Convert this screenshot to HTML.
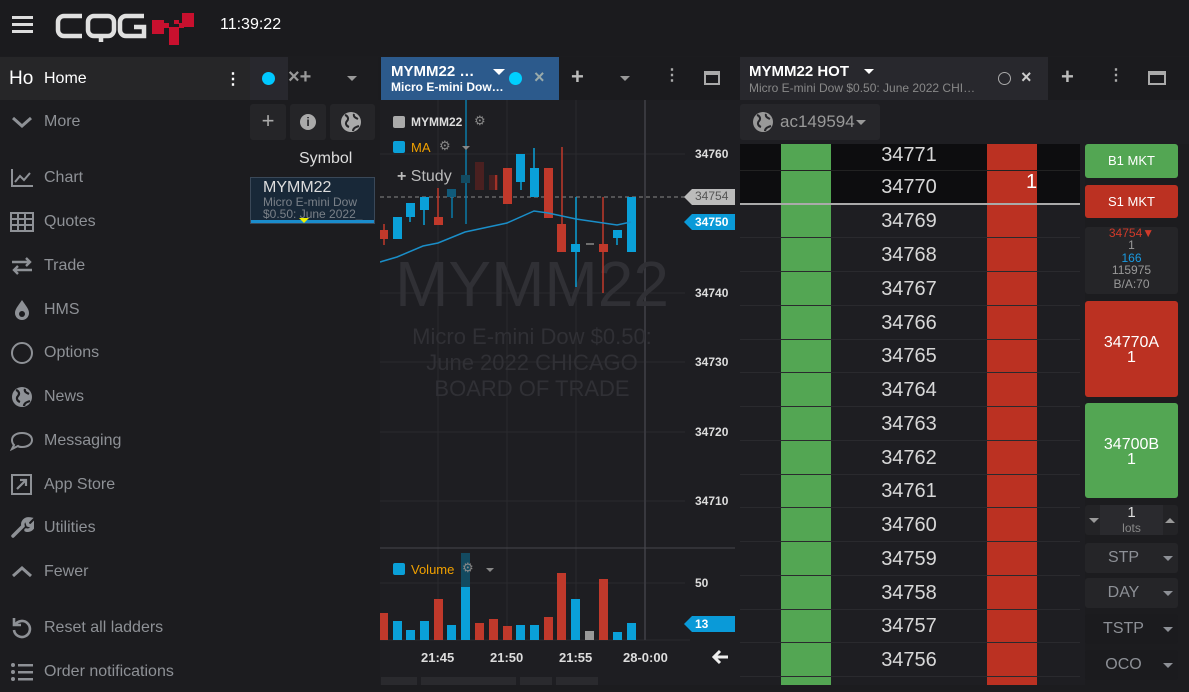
<!DOCTYPE html>
<html><head><meta charset="utf-8"><style>
*{box-sizing:border-box;margin:0;padding:0}
body{width:1189px;height:685px;overflow:hidden;background:#1c1c1f;font-family:"Liberation Sans",Arial,sans-serif;position:relative;color:#ddd}
.a{position:absolute}
.side .it{position:absolute;left:0;width:250px;height:40px;display:flex;align-items:center;font-size:16px;color:#8e9196}
.side .it svg{position:absolute;left:10px}
.side .it span{position:absolute;left:44px}
.row{position:absolute;left:740px;width:340px;height:34px;border-bottom:1px solid #2a2a2e}
.px{position:absolute;left:831px;width:156px;text-align:center;font-size:20px;color:#d8d8d8;line-height:34px}
.btn{position:absolute;left:1085px;width:93px;border-radius:3px;text-align:center;color:#fff;font-size:13px}
.sel{position:absolute;left:1085px;width:93px;height:30px;background:#252528;border-radius:3px;color:#8d9096;font-size:16px;line-height:30px;padding-right:16px;text-align:center}
.sel:after{content:"";position:absolute;right:5px;top:13px;border:5px solid transparent;border-top:5px solid #8d9096}
.ax{position:absolute;left:695px;font-size:12px;color:#ddd;font-weight:bold}
</style></head><body>
<!-- top bar -->
<div class="a" style="left:0;top:0;width:1189px;height:56px;background:#1b1b1e"></div>
<div class="a" style="left:12px;top:16px;width:21px;height:3px;background:#ddd;box-shadow:0 7px 0 #ddd,0 14px 0 #ddd"></div>
<svg class="a" style="left:54px;top:10px" width="145" height="36">
<g fill="none" stroke="#e0e0e0" stroke-width="4.5">
<path d="M28 6H10a6 6 0 00-6 6v8a6 6 0 006 6h18"/>
<rect x="34" y="6" width="26" height="20" rx="6"/><path d="M47 26v6"/>
<path d="M90 6H72a6 6 0 00-6 6v8a6 6 0 006 6h18v-9h-10"/>
</g>
<g fill="#c8102e"><rect x="98" y="10" width="12" height="14"/><rect x="110" y="13" width="5" height="5"/><rect x="115" y="17" width="10" height="18"/><rect x="125" y="13" width="5" height="5"/><rect x="128" y="3" width="12" height="14"/><rect x="120" y="10" width="5" height="4"/></g>
</svg>
<div class="a" style="left:220px;top:16px;font-size:16px;color:#fff">11:39:22</div>

<!-- sidebar -->
<div class="side">
<div class="it" style="top:57px;height:43px;background:#262628;color:#fff"><span style="left:9px;font-size:19px">Ho</span><span style="font-size:16px">Home</span><span style="left:225px;font-weight:bold">⋮</span></div>
<div class="it" style="top:102px"><svg width="24" height="14" viewBox="0 0 24 14"><path d="M3 3l9 8 9-8" stroke="#8e9196" stroke-width="3" fill="none"/></svg><span>More</span></div>
<div class="it" style="top:158px"><svg width="24" height="20"><path d="M2 1v17h21M5 14l5-6 4 4 6-7" stroke="#8e9196" stroke-width="2" fill="none"/></svg><span>Chart</span></div>
<div class="it" style="top:202px"><svg width="24" height="20"><rect x="1" y="1" width="22" height="18" stroke="#8e9196" stroke-width="2" fill="none"/><path d="M1 7h22M1 13h22M8 1v18M15 1v18" stroke="#8e9196" stroke-width="2"/></svg><span>Quotes</span></div>
<div class="it" style="top:246px"><svg width="24" height="20"><path d="M2 6h18M16 2l4 4-4 4M22 14H4M8 10l-4 4 4 4" stroke="#8e9196" stroke-width="2.4" fill="none"/></svg><span>Trade</span></div>
<div class="it" style="top:290px"><svg width="24" height="22"><path d="M12 1c-4 6-7 9-7 13a7 7 0 0014 0c0-4-3-7-7-13z" fill="#8e9196"/><circle cx="12" cy="15" r="3" fill="#1c1c1f"/></svg><span>HMS</span></div>
<div class="it" style="top:333px"><svg width="24" height="24"><circle cx="12" cy="12" r="10" stroke="#8e9196" stroke-width="2" fill="none"/></svg><span>Options</span></div>
<div class="it" style="top:377px"><svg width="24" height="24"><circle cx="12" cy="12" r="10" fill="#8e9196"/><path d="M6 5c3 1 4 4 2 6s-1 5 2 6M15 4c-1 3 2 4 4 5M14 21c0-3 3-4 6-5" stroke="#1c1c1f" stroke-width="2.2" fill="none"/></svg><span>News</span></div>
<div class="it" style="top:421px"><svg width="24" height="24"><path d="M12 4c6 0 10 3 10 7s-4 7-10 7c-2 0-3 0-4-1l-6 3 2-4c-1-1-2-3-2-5 0-4 4-7 10-7z" stroke="#8e9196" stroke-width="2" fill="none"/></svg><span>Messaging</span></div>
<div class="it" style="top:465px"><svg width="24" height="24"><rect x="2" y="2" width="19" height="19" stroke="#8e9196" stroke-width="2" fill="none"/><path d="M7 16l9-9M10 7h6v6" stroke="#8e9196" stroke-width="2.2" fill="none"/></svg><span>App Store</span></div>
<div class="it" style="top:508px"><svg width="24" height="24"><path d="M3 20l10-10M13 10c-1-4 2-8 7-7l-3 3 1 3 3 1 3-3c0 5-4 8-8 7" stroke="#8e9196" stroke-width="3.5" fill="none" stroke-linecap="round"/></svg><span>Utilities</span></div>
<div class="it" style="top:552px"><svg width="24" height="14"><path d="M3 11l9-8 9 8" stroke="#8e9196" stroke-width="3" fill="none"/></svg><span>Fewer</span></div>
<div class="it" style="top:608px"><svg width="24" height="24"><path d="M5 9a8 8 0 11-1 5M4 2v7h7" stroke="#8e9196" stroke-width="2.6" fill="none"/></svg><span>Reset all ladders</span></div>
<div class="it" style="top:652px"><svg width="24" height="22"><g fill="#8e9196"><circle cx="3" cy="4" r="2"/><circle cx="3" cy="11" r="2"/><circle cx="3" cy="18" r="2"/><rect x="8" y="3" width="15" height="2.5"/><rect x="8" y="10" width="15" height="2.5"/><rect x="8" y="17" width="15" height="2.5"/></g></svg><span>Order notifications</span></div>
</div>

<!-- symbol panel -->
<div class="a" style="left:250px;top:57px;width:38px;height:43px;background:#28282e"></div>
<div class="a" style="left:262px;top:72px;width:13px;height:13px;border-radius:50%;background:#00c8ff"></div>
<div class="a" style="left:288px;top:66px;font-size:20px;color:#999;font-weight:bold">×+</div>
<div class="a" style="left:347px;top:76px;border:5px solid transparent;border-top:5px solid #999"></div>
<div class="a" style="left:250px;top:104px;width:36px;height:36px;background:#252528;border-radius:3px;color:#aaa;font-size:22px;text-align:center;line-height:34px">+</div>
<div class="a" style="left:290px;top:104px;width:36px;height:36px;background:#252528;border-radius:3px"><div style="margin:10px auto;width:16px;height:16px;border-radius:50%;background:#aaa;color:#252528;font-size:12px;font-weight:bold;text-align:center;line-height:16px">i</div></div>
<div class="a" style="left:330px;top:104px;width:45px;height:36px;background:#252528;border-radius:3px"><svg style="margin:7px 10px" width="22" height="22"><circle cx="11" cy="11" r="10" fill="#aaa"/><path d="M5 4c3 1 4 4 2 6s-1 5 2 6M14 3c-1 3 2 4 4 5M13 20c0-3 3-4 6-5" stroke="#252528" stroke-width="2" fill="none"/></svg></div>
<div class="a" style="left:299px;top:150px;font-size:16px;color:#ddd">Symbol</div>
<div class="a" style="left:250px;top:177px;width:125px;height:47px;background:#182838;border:1px solid #3a4858;overflow:hidden">
<div style="position:absolute;left:12px;top:1px;font-size:16px;color:#ddd">MYMM22</div>
<div style="position:absolute;left:12px;top:18px;font-size:12px;color:#7a8088;line-height:12px;white-space:nowrap">Micro E-mini Dow<br>$0.50: June 2022_</div>
<div style="position:absolute;left:0;bottom:0;width:125px;height:3px;background:#1a8ccc"></div>
<div style="position:absolute;left:48px;bottom:0;border:5px solid transparent;border-top:5px solid #ee0;border-bottom:0"></div>
</div>

<!-- chart tab bar -->
<div class="a" style="left:378px;top:57px;width:362px;height:43px;background:#1b1b1e"></div>
<div class="a" style="left:381px;top:57px;width:178px;height:43px;background:#2c5a8c"></div>
<div class="a" style="left:391px;top:63px;font-size:15px;color:#fff;font-weight:bold;line-height:17px">MYMM22 …</div>
<div class="a" style="left:391px;top:80px;font-size:12px;color:#fff;font-weight:bold">Micro E-mini Dow…</div>
<div class="a" style="left:493px;top:69px;border:6px solid transparent;border-top:6px solid #fff"></div>
<div class="a" style="left:509px;top:72px;width:13px;height:13px;border-radius:50%;background:#00d0ff"></div>
<div class="a" style="left:534px;top:67px;font-size:18px;color:#9aa;font-weight:bold">×</div>
<div class="a" style="left:571px;top:64px;font-size:22px;color:#bbb;font-weight:bold">+</div>
<div class="a" style="left:620px;top:76px;border:5px solid transparent;border-top:5px solid #999"></div>
<div class="a" style="left:664px;top:65px;font-size:16px;color:#aaa;font-weight:bold">⋮</div>
<div class="a" style="left:704px;top:71px;width:16px;height:14px;border:2px solid #aaa;border-top-width:4px"></div>

<!-- chart -->
<div class="a" style="left:380px;top:100px;width:360px;height:585px;background:#1e1e22"></div>
<svg class="a" style="left:380px;top:100px" width="360" height="585" viewBox="380 100 360 585">
<g stroke="#2a2a2e" stroke-width="1"><line x1="438" y1="100" x2="438" y2="640"/><line x1="507" y1="100" x2="507" y2="640"/><line x1="576" y1="100" x2="576" y2="640"/><line x1="380" y1="154" x2="685" y2="154"/><line x1="380" y1="293" x2="685" y2="293"/><line x1="380" y1="362" x2="685" y2="362"/><line x1="380" y1="432" x2="685" y2="432"/><line x1="380" y1="501" x2="685" y2="501"/><line x1="380" y1="583" x2="685" y2="583"/><line x1="380" y1="640" x2="690" y2="640"/></g>
<line x1="645" y1="100" x2="645" y2="640" stroke="#38383e" stroke-width="2"/>
<line x1="380" y1="548" x2="735" y2="548" stroke="#46464c"/>
<text x="532" y="306" font-size="64" fill="#303035" text-anchor="middle" font-family="Liberation Sans">MYMM22</text>
<g font-size="22" fill="#303035" text-anchor="middle" font-family="Liberation Sans"><text x="532" y="344">Micro E-mini Dow $0.50:</text><text x="532" y="370">June 2022 CHICAGO</text><text x="532" y="396">BOARD OF TRADE</text></g>
<line x1="380" y1="197" x2="690" y2="197" stroke="#888" stroke-dasharray="4,3"/>
<g stroke-width="1.5">
<line x1="384" y1="224" x2="384" y2="245" stroke="#c0392b"/><rect x="380" y="230" width="8" height="9" fill="#c0392b"/>
<rect x="393" y="217" width="9" height="22" fill="#0aa0d8"/>
<line x1="410" y1="203" x2="410" y2="222" stroke="#0aa0d8"/><rect x="406" y="203" width="9" height="14" fill="#0aa0d8"/>
<line x1="424" y1="197" x2="424" y2="225" stroke="#0aa0d8"/><rect x="420" y="197" width="9" height="13" fill="#0aa0d8"/>
<line x1="438" y1="188" x2="438" y2="224" stroke="#c0392b"/><rect x="434" y="217" width="9" height="8" fill="#c0392b"/>
<line x1="452" y1="190" x2="452" y2="218" stroke="#0a7aa8"/><rect x="447" y="189" width="9" height="8" fill="#105a7a"/>
<line x1="466" y1="100" x2="466" y2="224" stroke="#0a7aa8"/><rect x="461" y="175" width="9" height="8" fill="#134a60"/>
<rect x="475" y="162" width="9" height="28" fill="#4a2020"/>
<rect x="489" y="175" width="9" height="15" fill="#4a2020"/><line x1="496" y1="175" x2="496" y2="190" stroke="#c0392b"/>
<rect x="503" y="168" width="9" height="36" fill="#c0392b"/>
<line x1="521" y1="154" x2="521" y2="190" stroke="#0aa0d8"/><rect x="516" y="154" width="9" height="28" fill="#0aa0d8"/>
<line x1="534" y1="148" x2="534" y2="197" stroke="#0aa0d8"/><rect x="530" y="168" width="9" height="29" fill="#0aa0d8"/>
<rect x="544" y="168" width="9" height="50" fill="#c0392b"/>
<line x1="562" y1="147" x2="562" y2="252" stroke="#c0392b"/><rect x="557" y="224" width="9" height="28" fill="#c0392b"/>
<line x1="576" y1="197" x2="576" y2="287" stroke="#0aa0d8"/><rect x="571" y="244" width="9" height="8" fill="#0aa0d8"/>
<line x1="586" y1="244" x2="594" y2="244" stroke="#888"/>
<line x1="603" y1="197" x2="603" y2="293" stroke="#c0392b"/><rect x="599" y="244" width="9" height="8" fill="#c0392b"/>
<line x1="617" y1="230" x2="617" y2="245" stroke="#0aa0d8"/><rect x="613" y="230" width="9" height="8" fill="#0aa0d8"/>
<rect x="627" y="197" width="9" height="55" fill="#0aa0d8"/>
</g>
<polyline points="380,262 397,257 423,246 438,243 465,232 507,223 534,211 548,213 576,219 617,225 631,222" fill="none" stroke="#1a8ec8" stroke-width="1.5"/>
<g>
<rect x="380" y="613" width="8" height="27" fill="#c0392b"/><rect x="393" y="621" width="9" height="19" fill="#0aa0d8"/><rect x="406" y="630" width="9" height="10" fill="#0aa0d8"/><rect x="420" y="621" width="9" height="19" fill="#0aa0d8"/><rect x="434" y="599" width="9" height="41" fill="#c0392b"/><rect x="447" y="625" width="9" height="15" fill="#0aa0d8"/><rect x="461" y="553" width="9" height="34" fill="#134a60"/><rect x="461" y="587" width="9" height="53" fill="#0aa0d8"/><rect x="475" y="623" width="9" height="17" fill="#c0392b"/><rect x="489" y="619" width="9" height="21" fill="#c0392b"/><rect x="503" y="626" width="9" height="14" fill="#c0392b"/><rect x="516" y="625" width="9" height="15" fill="#0aa0d8"/><rect x="530" y="625" width="9" height="15" fill="#0aa0d8"/><rect x="544" y="617" width="9" height="23" fill="#c0392b"/><rect x="557" y="573" width="9" height="67" fill="#c0392b"/><rect x="571" y="599" width="9" height="41" fill="#0aa0d8"/><rect x="585" y="631" width="9" height="9" fill="#999"/><rect x="599" y="579" width="9" height="61" fill="#c0392b"/><rect x="613" y="632" width="9" height="8" fill="#0aa0d8"/><rect x="627" y="623" width="9" height="17" fill="#0aa0d8"/>
</g>
<polygon points="684,197 692,189 735,189 735,205 692,205" fill="#bbb"/>
<polygon points="684,222 692,214 735,214 735,230 692,230" fill="#0a9ad8"/>
<polygon points="684,624 692,616 735,616 735,632 692,632" fill="#0a9ad8"/>
<path d="M728 657h-14M720 651l-6 6 6 6" stroke="#eee" stroke-width="3" fill="none"/>
</svg>
<div class="ax" style="top:147px">34760</div>
<div class="ax" style="top:189px;color:#555;font-weight:normal">34754</div>
<div class="ax" style="top:215px;color:#fff">34750</div>
<div class="ax" style="top:286px">34740</div>
<div class="ax" style="top:355px">34730</div>
<div class="ax" style="top:425px">34720</div>
<div class="ax" style="top:494px">34710</div>
<div class="ax" style="top:576px">50</div>
<div class="ax" style="top:617px;color:#fff">13</div>
<div class="a" style="left:393px;top:116px;width:12px;height:12px;background:#aaa;border-radius:2px"></div>
<div class="a" style="left:411px;top:115px;font-size:12px;color:#ddd;font-weight:bold">MYMM22</div>
<div class="a" style="left:474px;top:113px;font-size:13px;color:#888">⚙</div>
<div class="a" style="left:393px;top:141px;width:12px;height:12px;background:#0aa0d8;border-radius:2px"></div>
<div class="a" style="left:411px;top:140px;font-size:13px;color:#f0a000">MA</div>
<div class="a" style="left:439px;top:138px;font-size:13px;color:#888">⚙</div>
<div class="a" style="left:462px;top:146px;border:4px solid transparent;border-top:4px solid #888"></div>
<div class="a" style="left:397px;top:168px;font-size:16px;color:#bbb"><b>+</b> Study</div>
<div class="a" style="left:393px;top:563px;width:12px;height:12px;background:#0aa0d8;border-radius:2px"></div>
<div class="a" style="left:411px;top:562px;font-size:13px;color:#f0a000">Volume</div>
<div class="a" style="left:462px;top:560px;font-size:13px;color:#888">⚙</div>
<div class="a" style="left:486px;top:568px;border:4px solid transparent;border-top:4px solid #888"></div>
<div class="a" style="left:421px;top:650px;font-size:13px;color:#ddd;font-weight:bold">21:45</div>
<div class="a" style="left:490px;top:650px;font-size:13px;color:#ddd;font-weight:bold">21:50</div>
<div class="a" style="left:559px;top:650px;font-size:13px;color:#ddd;font-weight:bold">21:55</div>
<div class="a" style="left:623px;top:650px;font-size:13px;color:#ddd;font-weight:bold">28-0:00</div>
<div class="a" style="left:381px;top:677px;width:36px;height:8px;background:#2a2a2e"></div>
<div class="a" style="left:421px;top:677px;width:95px;height:8px;background:#2a2a2e"></div>
<div class="a" style="left:520px;top:677px;width:32px;height:8px;background:#2a2a2e"></div>
<div class="a" style="left:556px;top:677px;width:42px;height:8px;background:#2a2a2e"></div>

<!-- ladder header -->
<div class="a" style="left:740px;top:57px;width:449px;height:43px;background:#1b1b1e"></div>
<div class="a" style="left:740px;top:57px;width:308px;height:43px;background:#28282d"></div>
<div class="a" style="left:749px;top:63px;font-size:15px;color:#fff;font-weight:bold">MYMM22 HOT</div>
<div class="a" style="left:864px;top:69px;border:5px solid transparent;border-top:5px solid #fff"></div>
<div class="a" style="left:749px;top:81px;font-size:12px;color:#888">Micro E-mini Dow $0.50: June 2022 CHI…</div>
<div class="a" style="left:998px;top:72px;width:13px;height:13px;border-radius:50%;border:1.5px solid #aaa"></div>
<div class="a" style="left:1021px;top:67px;font-size:18px;color:#ccc;font-weight:bold">×</div>
<div class="a" style="left:1061px;top:64px;font-size:22px;color:#bbb;font-weight:bold">+</div>
<div class="a" style="left:1108px;top:65px;font-size:16px;color:#aaa;font-weight:bold">⋮</div>
<div class="a" style="left:1148px;top:71px;width:18px;height:14px;border:2px solid #aaa;border-top-width:4px"></div>
<div class="a" style="left:740px;top:100px;width:449px;height:44px;background:#1e1e22"></div>
<div class="a" style="left:740px;top:104px;width:140px;height:36px;background:#26262a;border-radius:3px"></div>
<svg class="a" style="left:752px;top:111px" width="22" height="22"><circle cx="11" cy="11" r="10" fill="#999"/><path d="M5 4c3 1 4 4 2 6s-1 5 2 6M14 3c-1 3 2 4 4 5M13 20c0-3 3-4 6-5" stroke="#26262a" stroke-width="2" fill="none"/></svg>
<div class="a" style="left:780px;top:112px;font-size:17px;color:#999">ac149594</div>
<div class="a" style="left:856px;top:120px;border:5px solid transparent;border-top:5px solid #999"></div>

<!-- ladder -->
<div class="a" style="left:740px;top:144px;width:345px;height:541px;background:#1e1e22"></div>
<div class="a" style="left:740px;top:144px;width:340px;height:60px;background:#0d0d0f"></div>
<div class="a" style="left:781px;top:144px;width:50px;height:541px;background:#53a653"></div>
<div class="a" style="left:987px;top:144px;width:50px;height:541px;background:#bb3122"></div>
<div class="a" style="left:740px;top:170px;width:340px;height:1px;background:#222"></div>
<div class="a" style="left:740px;top:203px;width:340px;height:2px;background:#aaa"></div>
<div class="row" style="top:204px"></div><div class="row" style="top:238px"></div><div class="row" style="top:272px"></div><div class="row" style="top:306px"></div><div class="row" style="top:339px"></div><div class="row" style="top:373px"></div><div class="row" style="top:407px"></div><div class="row" style="top:441px"></div><div class="row" style="top:474px"></div><div class="row" style="top:508px"></div><div class="row" style="top:542px"></div><div class="row" style="top:576px"></div><div class="row" style="top:609px"></div><div class="row" style="top:643px"></div>
<div class="px" style="top:138px">34771</div>
<div class="px" style="top:170px">34770</div>
<div class="a" style="left:1026px;top:170px;font-size:20px;color:#fff;line-height:24px">1</div>
<div class="px" style="top:204px">34769</div><div class="px" style="top:238px">34768</div><div class="px" style="top:272px">34767</div><div class="px" style="top:306px">34766</div><div class="px" style="top:339px">34765</div><div class="px" style="top:373px">34764</div><div class="px" style="top:407px">34763</div><div class="px" style="top:441px">34762</div><div class="px" style="top:474px">34761</div><div class="px" style="top:508px">34760</div><div class="px" style="top:542px">34759</div><div class="px" style="top:576px">34758</div><div class="px" style="top:609px">34757</div><div class="px" style="top:643px">34756</div>

<!-- right controls -->
<div class="btn" style="top:144px;height:34px;line-height:34px;background:#53a653">B1 MKT</div>
<div class="btn" style="top:185px;height:33px;line-height:33px;background:#bb3122">S1 MKT</div>
<div class="btn" style="top:227px;height:67px;background:#252528;font-size:12px;line-height:11.5px;padding-top:1px;color:#999">
<div style="color:#d03a2a">34754▼</div><div>1</div><div style="color:#1a9ae0;margin-top:2px">166</div><div>115975</div><div style="margin-top:3px">B/A:70</div></div>
<div class="btn" style="top:301px;height:96px;background:#bb3122;font-size:16px;line-height:15px;padding-top:34px">34770A<br>1</div>
<div class="btn" style="top:403px;height:95px;background:#53a653;font-size:16px;line-height:15px;padding-top:34px">34700B<br>1</div>
<div class="a" style="left:1085px;top:505px;width:93px;height:30px;background:#232326;border-radius:3px"></div>
<div class="a" style="left:1100px;top:505px;width:63px;height:30px;background:#2a2a2e;text-align:center;font-size:15px;line-height:15px;color:#ddd">1<br><span style="font-size:12px;color:#888">lots</span></div>
<div class="a" style="left:1089px;top:518px;border:5px solid transparent;border-top:5px solid #999"></div>
<div class="a" style="left:1165px;top:513px;border:5px solid transparent;border-bottom:5px solid #999"></div>
<div class="sel" style="top:543px">STP</div>
<div class="sel" style="top:578px">DAY</div>
<div class="sel" style="top:614px;background:#1b1b1e">TSTP</div>
<div class="sel" style="top:650px;background:#1b1b1e">OCO</div>
</body></html>
